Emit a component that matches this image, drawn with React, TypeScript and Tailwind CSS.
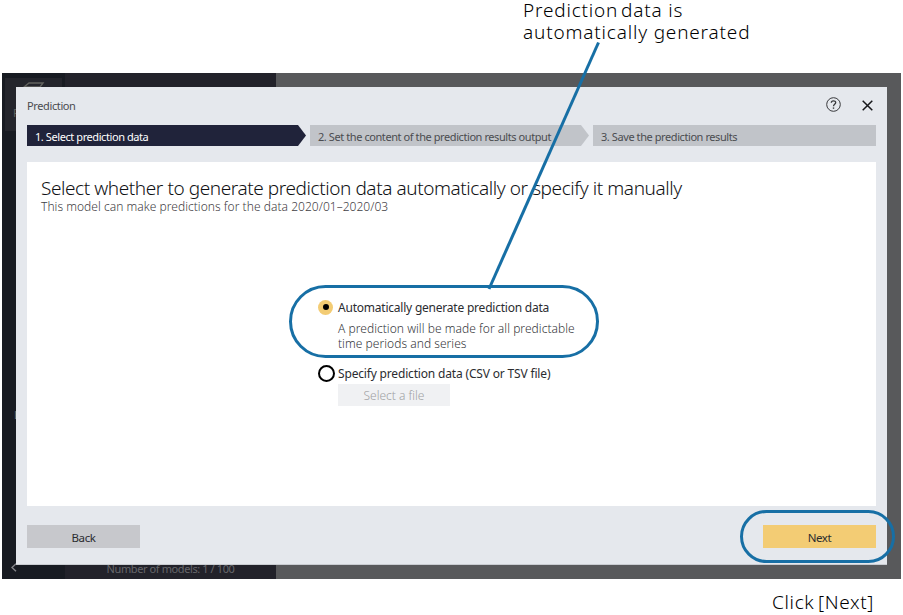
import React from "react";

const steps = [
  { label: "1. Select prediction data", width: "w-[279px]", colors: "bg-[#20233a] text-white", arrow: true },
  { label: "2. Set the content of the prediction results output", width: "w-[279px]", colors: "bg-[#c1c4c9] text-[#4b4c50]", arrow: true },
  { label: "3. Save the prediction results", width: "w-[283px]", colors: "bg-[#c1c4c9] text-[#4b4c50]", arrow: false },
];

function Backdrop() {
  return (
    <div className="flex h-full">
      <div className="relative w-[63px] bg-[#181b22]">
        <div className="ml-[3px] flex h-[53px] w-[57px] translate-y-[5px] flex-col bg-[#24252c]">
          <svg className="ml-[18px] mt-[4px]" width="22" height="18" viewBox="0 0 22 18" fill="none" stroke="#62635f" strokeWidth="1.4">
            <path d="M1 5 L6 1 H20 L17 5 Z M1 5 V16 H17 V5" />
          </svg>
          <span className="ml-[8px] mt-[5px] text-[11px] leading-4 text-[#62635f]">P</span>
        </div>
        <span className="absolute left-[12px] top-[334px] text-[11px] leading-4 text-[#77777b]">L</span>
        <svg className="absolute left-[9px] top-[490px]" width="6" height="9" viewBox="0 0 6 9" fill="none" stroke="#85858a" strokeWidth="1.4">
          <path d="M5 .8 L1 4.5 L5 8.2" />
        </svg>
      </div>
      <div className="flex w-[211px] items-end justify-center bg-[#22222a]">
        <span className="whitespace-nowrap text-[11px] leading-[20px] tracking-[-0.4px] text-[#66676a]">
          Number of models: 1 / 100
        </span>
      </div>
      <div className="flex-1 bg-[#58595b]" />
    </div>
  );
}

export default function App() {
  return (
    <div className="relative h-[615px] w-[903px] overflow-hidden bg-white pl-[2px] pt-[73px] font-['Noto_Sans',sans-serif]">
      <div className="relative h-[506px] w-[899px] overflow-hidden">
        <Backdrop />
        <section className="absolute left-[14px] top-[14px] flex h-[478px] w-[871px] flex-col border-b border-[#c9ccd1] bg-[#e5e8ed] px-[11px]">
          <header className="flex h-[38px] items-center justify-between pb-[2px]">
            <h2 className="pt-[3px] text-[11px] tracking-[-0.38px] text-[#4a4b4f]">Prediction</h2>
            <div className="flex items-center gap-[20px] pr-[3px]">
              <svg width="16" height="16" viewBox="0 0 16 16" fill="none" stroke="#38393c">
                <circle cx="7.5" cy="7.5" r="6.8" strokeWidth="1" />
                <path d="M5.3 5.8 C5.3 3.1 9.7 3.2 9.7 5.6 C9.7 7.3 7.5 7.4 7.5 9.2" strokeWidth="1.3" />
                <path d="M7.5 10.4 V11.8" strokeWidth="1.4" />
              </svg>
              <svg width="11" height="11" viewBox="0 0 11 11" stroke="#16171a" strokeWidth="1.5">
                <path d="M.7 .7 L10.3 10.3 M10.3 .7 L.7 10.3" />
              </svg>
            </div>
          </header>
          <nav className="flex h-[21px] gap-[4px]">
            {steps.map((s) => (
              <div
                key={s.label}
                className={`${s.width} ${s.colors} ${s.arrow ? "[clip-path:polygon(0_0,271px_0,100%_50%,271px_100%,0_100%)]" : ""} flex items-center whitespace-nowrap pl-[8px] pt-[3px] text-[11px] tracking-[-0.42px]`}
              >
                {s.label}
              </div>
            ))}
          </nav>
          <main className="mt-[16px] h-[344px] bg-white pl-[14px] pt-[14px]">
            <h1 className="whitespace-nowrap text-[19px] font-light leading-[24px] tracking-[-0.42px] text-[#101114]">
              Select whether to generate prediction data automatically or specify it manually
            </h1>
            <p className="whitespace-nowrap text-[12px] font-light leading-[14px] tracking-[0.035px] text-[#3f4044]">
              This model can make predictions for the data 2020/01–2020/03
            </p>
            <div className="ml-[277px] mt-[84px]">
              <label className="flex h-[18px] items-center">
                <span className="flex size-[15px] items-center justify-center rounded-full bg-[#f3cc74]">
                  <span className="size-[6px] rounded-full bg-black" />
                </span>
                <span className="ml-[5px] whitespace-nowrap pt-[1px] text-[12px] tracking-[-0.22px] text-[#2b2c30]">
                  Automatically generate prediction data
                </span>
              </label>
              <p className="ml-[20px] mt-[5px] whitespace-nowrap text-[12px] font-light leading-[15px] tracking-[0.04px] text-[#36373b]">
                A prediction will be made for all predictable
                <br />
                time periods and series
              </p>
              <label className="mt-[13px] flex h-[18px] items-center">
                <span className="size-[17px] rounded-full border-2 border-black bg-white" />
                <span className="ml-[3px] whitespace-nowrap pt-[1px] text-[12px] tracking-[-0.17px] text-[#2b2c30]">
                  Specify prediction data (CSV or TSV file)
                </span>
              </label>
              <button className="ml-[20px] mt-[2px] flex h-[22px] w-[112px] items-center justify-center bg-[#f0f1f3] pt-[1px] text-[12px] font-light text-[#a0a1a4]">
                Select a file
              </button>
            </div>
          </main>
          <footer className="mt-[19px] flex justify-between">
            <button className="h-[23px] w-[113px] bg-[#c7c8cc] pt-[2px] text-[11.5px] leading-[21px] tracking-[-0.4px] text-[#2b2c30]">
              Back
            </button>
            <button className="h-[23px] w-[113px] bg-[#f3cc74] pt-[2px] text-[11.5px] leading-[21px] tracking-[-0.4px] text-[#2b2c30]">
              Next
            </button>
          </footer>
        </section>
      </div>

      <p className="absolute left-[523px] top-[-1px] whitespace-nowrap text-[19px] font-light leading-[22px] tracking-[0.82px] text-black">
        <span className="[word-spacing:-3px]">Prediction data</span> is
        <br />
        automatically generated
      </p>
      <p className="absolute left-[772px] top-[591px] whitespace-nowrap text-[19px] font-light leading-[22px] tracking-[0.65px] text-black [word-spacing:-2px]">
        Click [Next]
      </p>
      <svg className="absolute inset-0" width="903" height="615" fill="none" stroke="#176fa5" strokeWidth="3">
        <path d="M598.5 42.5 L489 289" />
        <rect x="290.5" y="286.5" width="307" height="70" rx="35" />
        <rect x="741.5" y="511.5" width="152" height="50" rx="25" />
      </svg>
    </div>
  );
}
